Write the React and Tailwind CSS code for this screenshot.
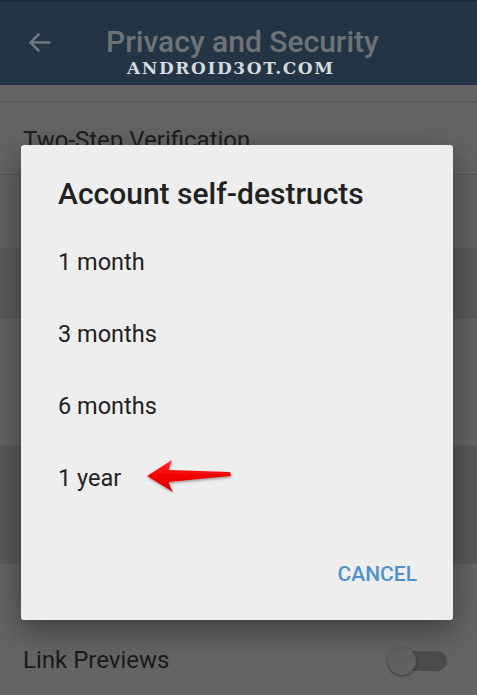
import React from "react";

function BackArrow() {
  return (
    <svg width="27" height="27" viewBox="0 0 24 24" fill="none">
      <path d="M20.5 12H4.5M11 5l-7 7 7 7" stroke="#6f7880" strokeWidth="2.2" strokeLinecap="square" />
    </svg>
  );
}

function RedArrow() {
  return (
    <svg width="96" height="42" viewBox="0 0 96 42" className="absolute left-[143px] top-[455px]">
      <defs>
        <linearGradient id="rg" x1="0" y1="0" x2="0" y2="1">
          <stop offset="0" stopColor="#ff3030" />
          <stop offset="0.5" stopColor="#f40000" />
          <stop offset="1" stopColor="#d80000" />
        </linearGradient>
        <filter id="sh" x="-20%" y="-40%" width="140%" height="180%">
          <feDropShadow dx="0.5" dy="1.5" stdDeviation="1.2" floodColor="#000" floodOpacity="0.35" />
        </filter>
      </defs>
      <path
        d="M4 21 L29 5 Q27 10 25.5 15 L87 17 L88 21 L25.5 27 Q27 32 30 37 Z"
        fill="url(#rg)"
        filter="url(#sh)"
      />
    </svg>
  );
}

export default function App() {
  return (
    <div className="relative w-[477px] h-[695px] overflow-hidden bg-[#646464] font-['Roboto',sans-serif]">
      {/* Header */}
      <div className="h-[85px] bg-[#233545] border-t-2 border-[#1d2b38] relative">
        <div className="flex items-start">
          <div className="pl-[26px] pt-[27px] w-[106px]">
            <BackArrow />
          </div>
          <div className="pt-[25px] text-[30px] leading-none font-medium text-[#6e7378]">Privacy and Security</div>
        </div>
        <div className="absolute left-[127px] top-[58px] text-[17px] leading-none font-bold tracking-[1.6px] text-[#d6dadf] font-['DejaVu_Serif',serif]">
          ANDROID3OT.COM
        </div>
      </div>

      {/* Background list (dimmed) */}
      <div className="h-[17px] bg-[#646464] border-b border-[#575757]" />
      <div className="h-[73px] bg-[#646464] border-b border-[#575757] flex items-center pl-[23px]">
        <span className="text-[24px] leading-none text-[#1c1c1c] pt-[3px]">Two-Step Verification</span>
      </div>
      <div className="h-[73px] bg-[#616161]" />
      <div className="h-[70px] bg-[#5a5a5a] border-b border-[#545454]" />
      <div className="h-[129px] bg-[#626262] border-b border-[#565656]" />
      <div className="h-[117px] bg-[#595959]" />
      <div className="h-[131px] bg-[#646464] flex items-start justify-between pl-[23px] pr-[30px] pt-[84px]">
        <span className="text-[24px] leading-none text-[#1a1a1a]">Link Previews</span>
        <div className="relative w-[59px] h-[28px] -mt-[1px] flex items-center">
          <div className="absolute right-0 w-[46px] h-[20px] rounded-full bg-[#4c4c4c]" />
          <div className="absolute left-0 w-[28px] h-[28px] rounded-full bg-[#616161] shadow-[0_1px_3px_rgba(0,0,0,0.45)]" />
        </div>
      </div>

      {/* Dialog */}
      <div className="absolute left-[21px] top-[145px] w-[432px] h-[475px] bg-[#eeeeee] rounded-[3px] shadow-[0_10px_30px_rgba(0,0,0,0.4)] pt-[34px]">
        <div className="pl-[37px] text-[30px] leading-none font-medium text-[#212121]">Account self-destructs</div>
        <div className="mt-[18px]">
          {["1 month", "3 months", "6 months", "1 year"].map((t) => (
            <div key={t} className="h-[72px] flex items-center pl-[37px] text-[23.5px] leading-none text-[#222222]">
              {t}
            </div>
          ))}
        </div>
        <div className="mt-[49px] flex justify-end pr-[36px]">
          <span className="text-[21px] leading-none font-medium text-[#4e91cd]">CANCEL</span>
        </div>
      </div>

      <RedArrow />
    </div>
  );
}
